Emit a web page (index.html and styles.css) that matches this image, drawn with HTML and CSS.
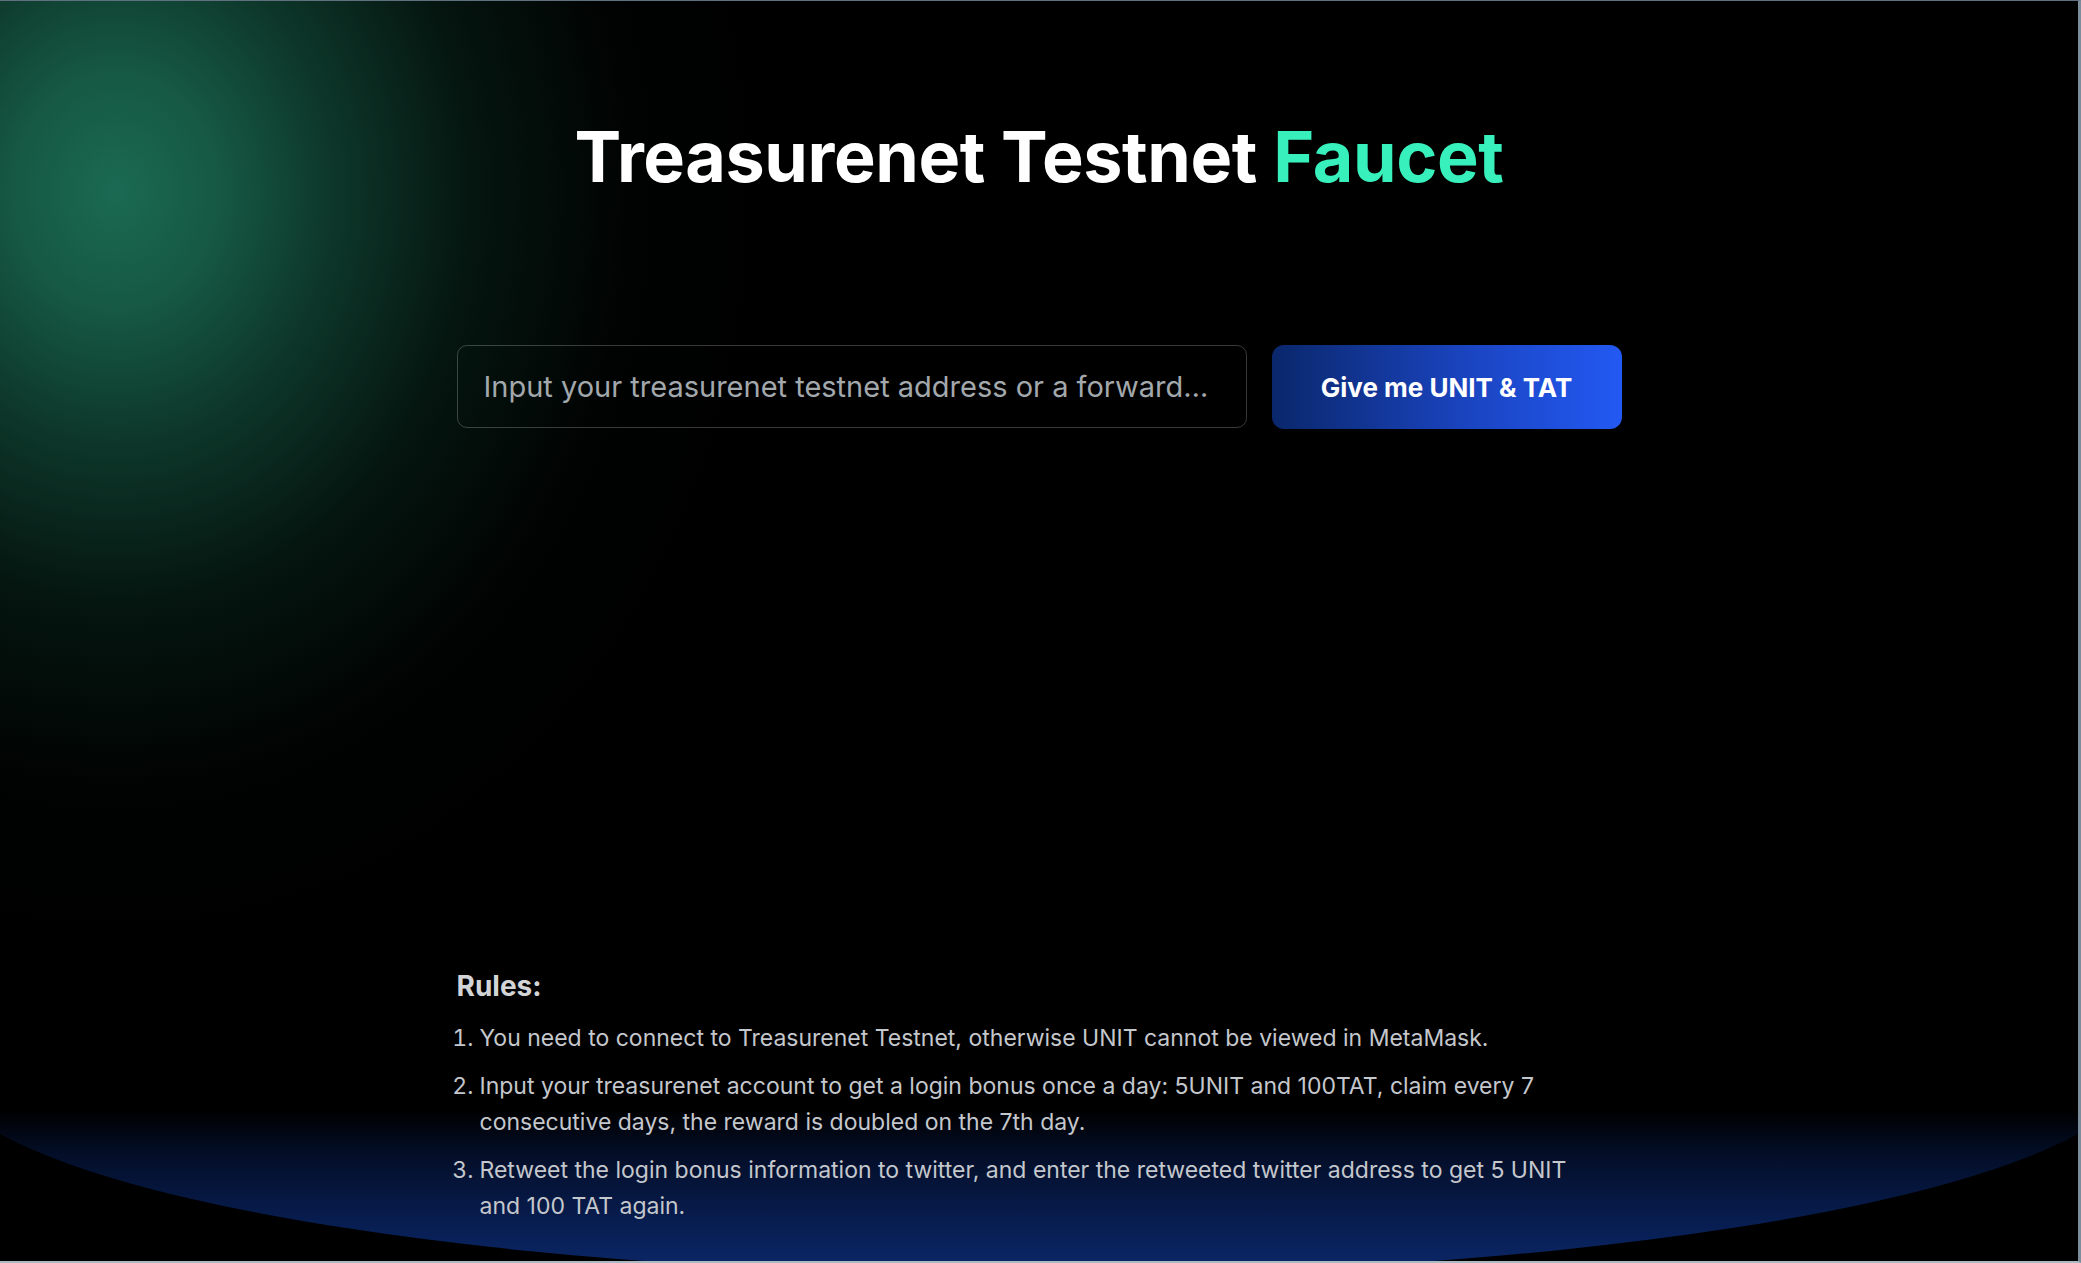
FILE: index.html
```html
<!DOCTYPE html>
<html lang="en">
<head>
<meta charset="utf-8">
<title>Treasurenet Testnet Faucet</title>
<link rel="stylesheet" href="styles.css">
</head>
<body>
<div class="page">
  <div class="glow-green"></div>
  <div class="horizon"></div>
  <main class="main">
    <h1 class="title">Treasurenet Testnet <span class="accent">Faucet</span></h1>
    <form class="claim">
      <input class="address" type="text" placeholder="Input your treasurenet testnet address or a forwarded twitter address">
      <button class="give" type="button">Give me UNIT &amp; TAT</button>
    </form>
    <section class="rules">
      <h2 class="rules-title">Rules:</h2>
      <ol class="rules-list">
        <li>You need to connect to Treasurenet Testnet, otherwise UNIT cannot be viewed in MetaMask.</li>
        <li>Input your treasurenet account to get a login bonus once a day: 5UNIT and 100TAT, claim every 7 consecutive days, the reward is doubled on the 7th day.</li>
        <li>Retweet the login bonus information to twitter, and enter the retweeted twitter address to get 5 UNIT and 100 TAT again.</li>
      </ol>
    </section>
  </main>
</div>
</body>
</html>
```
FILE: styles.css
```css
html, body {
  margin: 0;
  padding: 0;
  height: 100%;
  background: #000;
}
body {
  overflow: hidden;
  font-family: Inter, "Noto Sans", "Liberation Sans", sans-serif;
}
.page {
  position: relative;
  box-sizing: border-box;
  height: 100vh;
  border-top: 1px solid #5f707e;
  border-right: 3px solid #7b8c9b;
  border-bottom: 2px solid #aab9c2;
  background: #000;
  overflow: hidden;
}
.glow-green {
  position: absolute;
  inset: 0;
  background: radial-gradient(ellipse 640px 740px at 116px 190px,
    rgba(27, 106, 82, 1) 0%,
    rgba(23, 94, 72, 0.94) 16%,
    rgba(17, 72, 55, 0.76) 34%,
    rgba(10, 44, 33, 0.48) 56%,
    rgba(4, 18, 14, 0.18) 80%,
    rgba(0, 0, 0, 0) 100%);
  pointer-events: none;
}
.horizon {
  position: absolute;
  left: calc(50% - 1100px);
  top: 854px;
  width: 2200px;
  height: 420px;
  border-radius: 50%;
  background: linear-gradient(to bottom,
    rgba(0, 0, 0, 0) 0px,
    rgba(0, 0, 0, 0) 255px,
    rgba(3, 14, 40, 1) 300px,
    rgba(8, 30, 82, 1) 370px,
    rgba(11, 40, 106, 1) 420px);
  pointer-events: none;
}
.main {
  position: relative;
  width: 1165px;
  margin: 0 auto;
  padding-top: 114px;
}
.title {
  margin: 0;
  text-align: center;
  font-size: 70px;
  font-weight: 700;
  letter-spacing: -0.4px;
  line-height: 84px;
  color: #fff;
}
.accent {
  color: #37f0bb;
}
.claim {
  display: flex;
  gap: 25px;
  margin-top: 146px;
}
.address {
  box-sizing: border-box;
  width: 790px;
  height: 83px;
  padding: 0 26px;
  border: 1px solid rgba(255, 255, 255, 0.22);
  border-radius: 10px;
  background: transparent;
  color: #fff;
  font-family: Inter, "Noto Sans", sans-serif;
  font-size: 29px;
  text-overflow: ellipsis;
  outline: none;
}
.address::placeholder {
  color: #a3a8ad;
}
.give {
  box-sizing: border-box;
  width: 350px;
  height: 84px;
  border: 0;
  border-radius: 12px;
  background: linear-gradient(to right, #0a276b 0%, #1a44bf 55%, #2359f3 100%);
  color: #fff;
  font-family: Inter, "Noto Sans", sans-serif;
  font-size: 26px;
  font-weight: 700;
  cursor: pointer;
}
.rules {
  margin-top: 539px;
  color: #c4c7cc;
}
.rules-title {
  margin: 0 0 16px;
  font-size: 28px;
  font-weight: 700;
  line-height: 36px;
  color: #d2d4d7;
}
.rules-list {
  margin: 0;
  padding: 0 30px 0 23px;
  font-size: 23px;
  line-height: 36px;
}
.rules-list li {
  margin-bottom: 12px;
}
```
